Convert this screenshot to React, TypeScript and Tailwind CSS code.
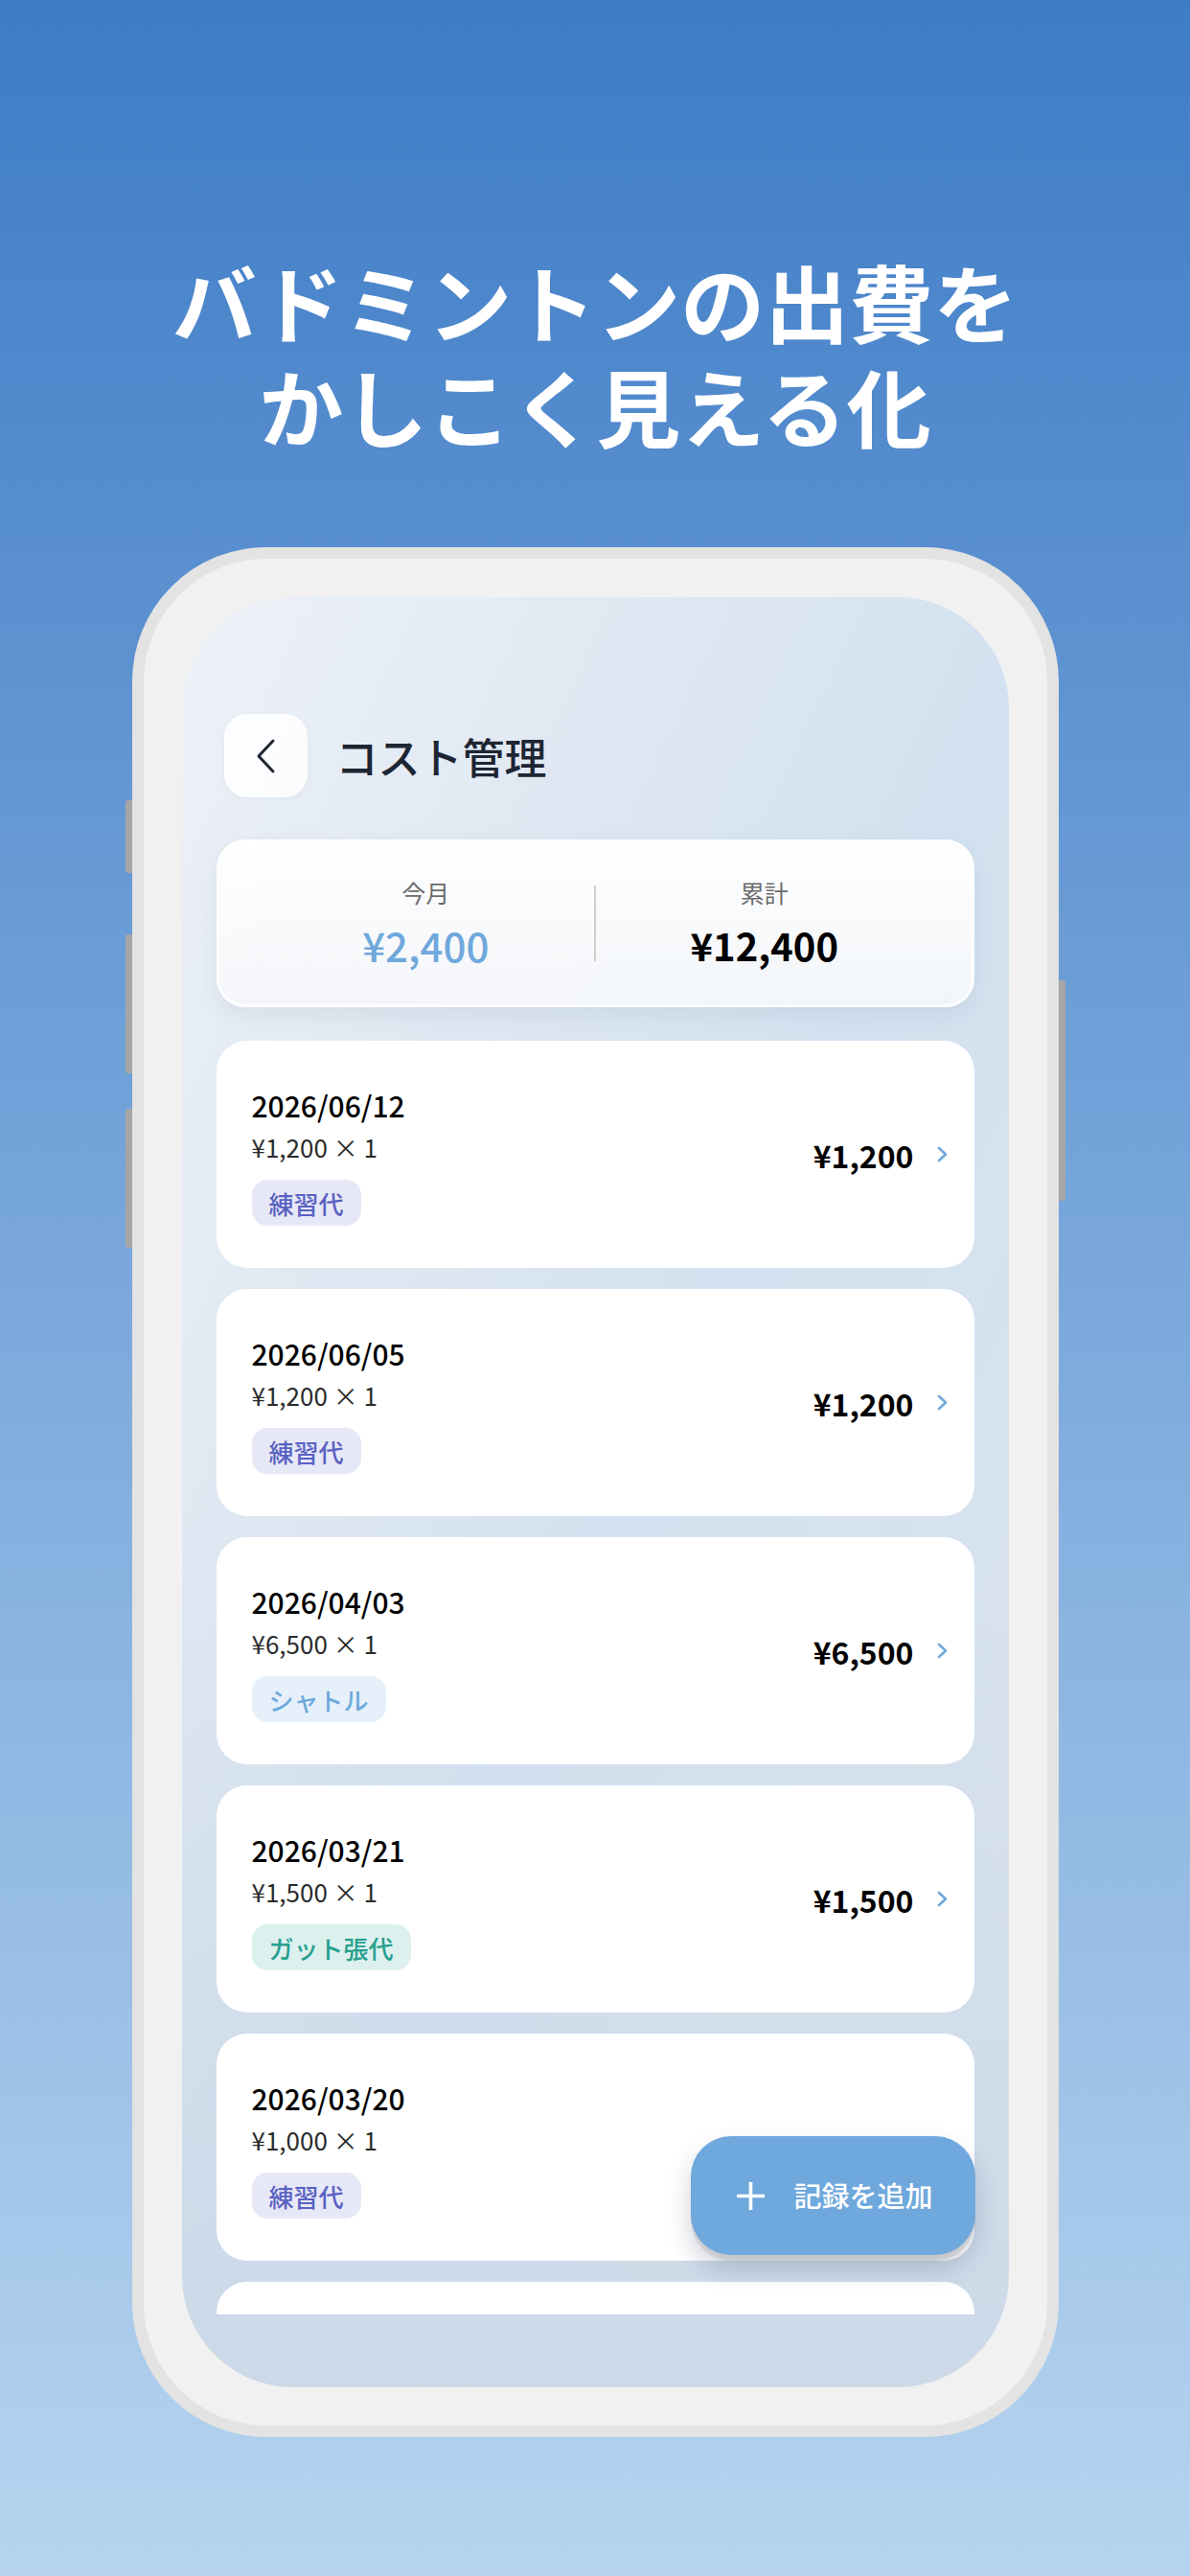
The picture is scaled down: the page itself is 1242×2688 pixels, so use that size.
import React from 'react';

type Record = {
  date: string;
  unit: string;
  total: string;
  tag: 'practice' | 'shuttle' | 'string';
};

const records: Record[] = [
  { date: '2026/06/12', unit: '¥1,200', total: '¥1,200', tag: 'practice' },
  { date: '2026/06/05', unit: '¥1,200', total: '¥1,200', tag: 'practice' },
  { date: '2026/04/03', unit: '¥6,500', total: '¥6,500', tag: 'shuttle' },
  { date: '2026/03/21', unit: '¥1,500', total: '¥1,500', tag: 'string' },
  { date: '2026/03/20', unit: '¥1,000', total: '¥1,000', tag: 'practice' },
];

const Tag: React.FC<{ kind: Record['tag'] }> = ({ kind }) => {
  if (kind === 'shuttle') {
    return (
      <span className="inline-flex h-[48px] items-center rounded-[16px] bg-[#e5f0fa] px-[18px] text-[26px] font-medium text-[#6fa8dc]">
        シャトル
      </span>
    );
  }
  if (kind === 'string') {
    return (
      <span className="inline-flex h-[48px] items-center rounded-[16px] bg-[#dcf0ee] px-[18px] text-[26px] font-medium text-[#27a08f]">
        ガット張代
      </span>
    );
  }
  return (
    <span className="inline-flex h-[48px] items-center rounded-[16px] bg-[#e7e8f7] px-[18px] text-[26px] font-medium text-[#5a62c2]">
      練習代
    </span>
  );
};

const RecordCard: React.FC<{ r: Record }> = ({ r }) => (
  <div className="flex h-[237px] shrink-0 items-center justify-between rounded-[32px] bg-white pl-[37px] pr-[27px]">
    <div className="flex flex-col">
      <div className="text-[30px] font-medium leading-[46px] text-black">{r.date}</div>
      <div className="mt-[3px] text-[26px] leading-[36px] text-[#2b2b2b]">{r.unit} × 1</div>
      <div className="mt-[16px]">
        <Tag kind={r.tag} />
      </div>
    </div>
    <div className="flex items-center gap-[23px]">
      <span className="text-[32px] font-bold text-black">{r.total}</span>
      <svg width="13" height="17" viewBox="0 0 13 17" fill="none">
        <path d="M3 2L10 8.5L3 15" stroke="#6fa8dc" strokeWidth="2.6" strokeLinecap="round" strokeLinejoin="round" />
      </svg>
    </div>
  </div>
);

export default function App() {
  return (
    <div className="min-h-[2688px] w-[1242px] overflow-hidden bg-linear-to-b from-[#3e7cc6] to-[#b6d4ef] font-['Noto_Sans_CJK_JP','Noto_Sans',sans-serif]">
      <h1 className="pt-[258px] text-center text-[88px] font-bold leading-[109px] text-white">
        <div>バドミントンの出費を</div>
        <div>かしこく見える化</div>
      </h1>

      <div className="relative mx-auto mt-[95px] h-[1972px] w-[967px]">
        {/* side buttons */}
        <div className="absolute left-[-7px] top-[264px] h-[76px] w-[12px] rounded-[3px] bg-[#a6a6a6]" />
        <div className="absolute left-[-7px] top-[404px] h-[145px] w-[12px] rounded-[3px] bg-[#a6a6a6]" />
        <div className="absolute left-[-7px] top-[586px] h-[145px] w-[12px] rounded-[3px] bg-[#a6a6a6]" />
        <div className="absolute right-[-7px] top-[452px] h-[230px] w-[12px] rounded-[3px] bg-[#a6a6a6]" />

        <div className="relative h-full w-full rounded-[140px] border-[12px] border-[#e3e3e3] bg-[#f1f1f1] p-[40px]">
          <div className="relative flex h-full flex-col overflow-hidden rounded-[116px] bg-[linear-gradient(180deg,transparent_55%,rgba(203,216,231,0.9)_100%),linear-gradient(115deg,#eef2f8_0%,#dfe8f2_28%,#d3e2f0_52%,#dbe3ed_100%)] px-[36px] pb-[76px]">
            {/* header */}
            <div className="flex items-center gap-[30px] pl-[8px] pt-[122px]">
              <div className="flex h-[87px] w-[87px] items-center justify-center rounded-[24px] bg-white/85 shadow-[0_2px_6px_rgba(0,0,0,0.04)]">
                <svg width="22" height="38" viewBox="0 0 22 38" fill="none">
                  <path d="M19 3L4 19L19 35" stroke="#1f2633" strokeWidth="3" strokeLinecap="round" strokeLinejoin="round" />
                </svg>
              </div>
              <span className="text-[44px] font-medium text-[#1e2533]">コスト管理</span>
            </div>

            {/* summary */}
            <div className="mt-[44px] flex h-[175px] shrink-0 items-center rounded-[30px] border-[3px] border-white/90 bg-linear-to-b from-white/95 to-[#f4f6f8]/95 px-[40px] shadow-[0_8px_24px_rgba(40,60,90,0.08)]">
              <div className="flex flex-1 flex-col items-center">
                <span className="text-[25px] leading-[36px] text-[#6b6b6b]">今月</span>
                <span className="mt-[9px] text-[42px] font-medium leading-[56px] text-[#6fa8dc]">¥2,400</span>
              </div>
              <div className="h-[79px] w-[2px] bg-[#cfcfcf]" />
              <div className="flex flex-1 flex-col items-center">
                <span className="text-[25px] leading-[36px] text-[#6b6b6b]">累計</span>
                <span className="mt-[9px] text-[40px] font-bold leading-[56px] text-black">¥12,400</span>
              </div>
            </div>

            {/* list */}
            <div className="mt-[35px] flex min-h-0 flex-1 flex-col gap-[22px] overflow-hidden">
              {records.map((r, i) => (
                <RecordCard key={i} r={r} />
              ))}
              {/* next card, scrolled below the fold */}
              <div className="h-[237px] shrink-0 rounded-[32px] bg-white" />
            </div>

            {/* FAB */}
            <button className="absolute bottom-[138px] right-[35px] flex h-[124px] w-[297px] items-center gap-[30px] rounded-[42px] bg-[#6fa8dc] pl-[47px] shadow-[0_6px_0_rgba(0,0,0,0.08),0_14px_26px_rgba(30,50,80,0.22)]">
              <svg width="31" height="31" viewBox="0 0 31 31" fill="none">
                <path d="M15.5 1V30M1 15.5H30" stroke="white" strokeWidth="3.6" />
              </svg>
              <span className="text-[29px] font-medium text-white">記録を追加</span>
            </button>
          </div>
        </div>
      </div>
    </div>
  );
}
